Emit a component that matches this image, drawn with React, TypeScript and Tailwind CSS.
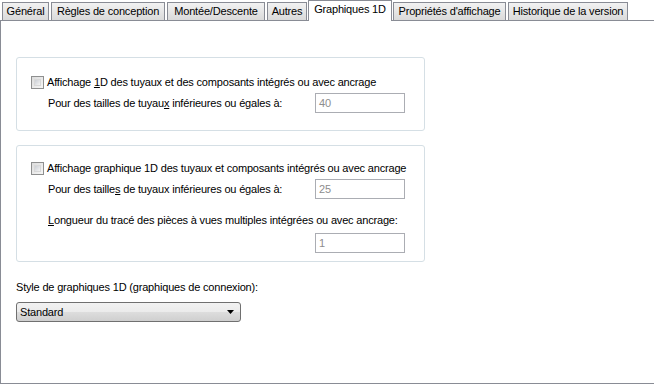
import React from 'react'

const tabs = [
  { label: 'Général', w: 48 },
  { label: 'Règles de conception', w: 115 },
  { label: 'Montée/Descente', w: 99 },
  { label: 'Autres', w: 41 },
  { label: 'Graphiques 1D', w: 84, active: true },
  { label: "Propriétés d'affichage", w: 114 },
  { label: 'Historique de la version', w: 121 },
]

function Checkbox() {
  return (
    <span className="inline-block w-[13px] h-[13px] border border-[#8e8f8f] bg-[linear-gradient(135deg,#dcdcdc,#f6f6f6)] p-[2px] shrink-0">
      <span className="block w-full h-full bg-[linear-gradient(135deg,#cbcfd5,#f3f3f3)] border border-[#d8d8d8]" />
    </span>
  )
}

function Field({ value }: { value: string }) {
  return (
    <div className="w-[90px] h-[20px] border border-[#abadb3] bg-white px-[3px] leading-[18px] text-[#8d8d8d]">
      {value}
    </div>
  )
}

export default function App() {
  return (
    <div className="w-[654px] h-[386px] bg-white text-[11px] leading-[13px] tracking-[-0.18px] text-black font-['Liberation_Sans',Tahoma,sans-serif] overflow-hidden">
      <div className="flex items-end h-[20px] pl-[1px]">
        {tabs.map((t) =>
          t.active ? (
            <div
              key={t.label}
              className="h-[21px] bg-white border border-b-0 border-[#898c95] leading-[17px] text-center whitespace-nowrap relative z-10 -mb-[1px]"
              style={{ width: t.w }}
            >
              {t.label}
            </div>
          ) : (
            <div
              key={t.label}
              className="h-[18px] bg-[linear-gradient(#f2f2f2,#e6e6e6_50%,#dadada)] border border-b-0 border-[#898c95] ml-[1px] mr-[1px] leading-[17px] text-center whitespace-nowrap"
              style={{ width: t.w - 1 }}
            >
              {t.label}
            </div>
          ),
        )}
      </div>
      <div className="border border-[#898c95] border-r-0 h-[364px] px-[15px] pt-[36px]">
        <div className="w-[409px] h-[74px] border border-[#d5dfe5] rounded-[3px] pl-[14px] pt-[17px]">
          <div className="flex items-center gap-[3px] h-[14px]">
            <Checkbox />
            <span>
              Affichage <span className="underline">1</span>D des tuyaux et des composants intégrés ou avec ancrage
            </span>
          </div>
          <div className="flex items-center mt-[4px] pl-[17px]">
            <span className="w-[267px]">
              Pour des tailles de tuyau<span className="underline">x</span> inférieures ou égales à:
            </span>
            <Field value="40" />
          </div>
        </div>
        <div className="w-[409px] h-[117px] border border-[#d5dfe5] rounded-[3px] pl-[14px] pt-[15px] mt-[14px]">
          <div className="flex items-center gap-[3px] h-[14px]">
            <Checkbox />
            <span>
              Affichage <span className="underline">g</span>raphique 1D des tuyaux et composants intégrés ou avec ancrage
            </span>
          </div>
          <div className="flex items-center mt-[4px] pl-[17px]">
            <span className="w-[267px]">
              Pour des taille<span className="underline">s</span> de tuyaux inférieures ou égales à:
            </span>
            <Field value="25" />
          </div>
          <div className="pl-[17px] mt-[15px]">
            <span className="underline">L</span>ongueur du tracé des pièces à vues multiples intégrées ou avec ancrage:
          </div>
          <div className="pl-[284px] mt-[6px]">
            <Field value="1" />
          </div>
        </div>
        <div className="mt-[19px]">Style de graphiques 1D (graphiques de connexion):</div>
        <div className="mt-[8px] w-[225px] h-[20px] border border-[#707070] rounded-[3px] bg-[linear-gradient(#f2f2f2,#ebebeb_50%,#dddddd_50%,#cfcfcf)] flex items-center justify-between pl-[3px] pr-[6px]">
          <span>Standard</span>
          <svg width="7" height="4" viewBox="0 0 7 4">
            <path d="M0 0h7L3.5 4z" fill="#000" />
          </svg>
        </div>
      </div>
    </div>
  )
}
